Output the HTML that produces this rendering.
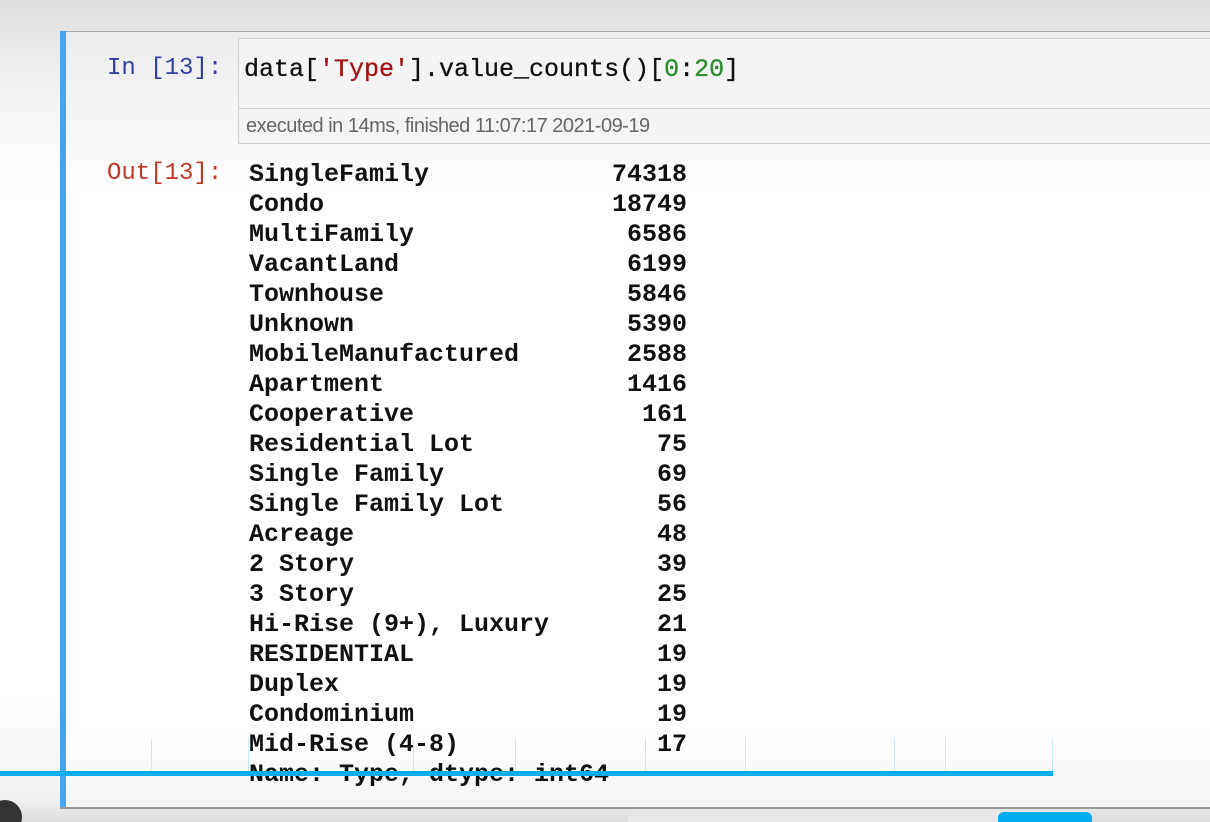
<!DOCTYPE html>
<html><head><style>
html,body{margin:0;padding:0;width:1210px;height:822px;overflow:hidden;position:relative;
background:linear-gradient(#dedede 0px,#ececec 60px,#fbfbfb 150px,#fff 200px,#fff 700px,#f0f0f0 800px,#dcdcdc 822px);font-family:"Liberation Mono",monospace}
.cell{position:absolute;left:60px;top:31px;width:1160px;height:775px;border-top:1px solid #aaa;border-bottom:2px solid #999;background:linear-gradient(#ececec,#f6f6f6 100px,#fff 160px,#fff 700px,#f4f4f4 775px)}
.bar{position:absolute;left:60px;top:31px;width:6px;height:776px;background:#42a5f5}
.inbox{position:absolute;left:238px;top:38px;width:990px;height:104px;border:1px solid #cfcfcf;background:#f4f4f4}
.sep{position:absolute;left:238px;top:108px;width:990px;height:1px;background:#cfcfcf}
.code{position:absolute;left:244px;top:55px;font-size:25px;color:#111;white-space:pre;-webkit-text-stroke:0.3px #111}
.exec{position:absolute;left:246px;top:115px;font-family:"Liberation Sans",sans-serif;font-size:20px;color:#666;letter-spacing:-0.5px}
.pin{position:absolute;left:107px;top:55px;font-size:24px;color:#303f9f}
.pout{position:absolute;left:107px;top:160px;font-size:24px;color:#c0392b}
.row{position:absolute;left:249px;width:438px;font-size:25px;font-weight:bold;color:#111;height:30px;line-height:30px}
.row span{position:absolute;right:0;top:0}
.blue{position:absolute;left:0;top:771px;width:1053px;height:5px;background:#00aeef}
.vl{position:absolute;top:738px;width:1px;height:33px;background:#cde9f7}
</style></head><body>
<div class="cell"></div>
<div class="bar"></div>
<div class="inbox"></div>
<div class="sep"></div>
<div class="pin">In [13]:</div>
<div class="code">data[<span style="color:#a31515;-webkit-text-stroke-color:#a31515">'Type'</span>].value_counts()[<span style="color:#2e8b2e;-webkit-text-stroke-color:#2e8b2e">0</span>:<span style="color:#2e8b2e;-webkit-text-stroke-color:#2e8b2e">20</span>]</div>
<div class="exec">executed in 14ms, finished 11:07:17 2021-09-19</div>
<div class="pout">Out[13]:</div>
<div class="row" style="top:160px">SingleFamily<span>74318</span></div>
<div class="row" style="top:190px">Condo<span>18749</span></div>
<div class="row" style="top:220px">MultiFamily<span>6586</span></div>
<div class="row" style="top:250px">VacantLand<span>6199</span></div>
<div class="row" style="top:280px">Townhouse<span>5846</span></div>
<div class="row" style="top:310px">Unknown<span>5390</span></div>
<div class="row" style="top:340px">MobileManufactured<span>2588</span></div>
<div class="row" style="top:370px">Apartment<span>1416</span></div>
<div class="row" style="top:400px">Cooperative<span>161</span></div>
<div class="row" style="top:430px">Residential Lot<span>75</span></div>
<div class="row" style="top:460px">Single Family<span>69</span></div>
<div class="row" style="top:490px">Single Family Lot<span>56</span></div>
<div class="row" style="top:520px">Acreage<span>48</span></div>
<div class="row" style="top:550px">2 Story<span>39</span></div>
<div class="row" style="top:580px">3 Story<span>25</span></div>
<div class="row" style="top:610px">Hi-Rise (9+), Luxury<span>21</span></div>
<div class="row" style="top:640px">RESIDENTIAL<span>19</span></div>
<div class="row" style="top:670px">Duplex<span>19</span></div>
<div class="row" style="top:700px">Condominium<span>19</span></div>
<div class="row" style="top:730px">Mid-Rise (4-8)<span>17</span></div>
<div class="row" style="top:760px;width:500px">Name: Type, dtype: int64</div>
<div class="vl" style="left:151px"></div><div class="vl" style="left:248px"></div><div class="vl" style="left:413px"></div>
<div class="vl" style="left:515px"></div><div class="vl" style="left:645px"></div><div class="vl" style="left:745px"></div>
<div class="vl" style="left:894px"></div><div class="vl" style="left:945px"></div><div class="vl" style="left:1052px"></div>
<div class="blue"></div>
<div style="position:absolute;left:-12px;top:800px;width:34px;height:34px;border-radius:50%;background:#333"></div>
<div style="position:absolute;left:628px;top:812px;width:380px;height:20px;border-radius:8px;background:#e8e8e8"></div>
<div style="position:absolute;left:998px;top:812px;width:94px;height:20px;border-radius:6px;background:#00aeef"></div>
</body></html>
